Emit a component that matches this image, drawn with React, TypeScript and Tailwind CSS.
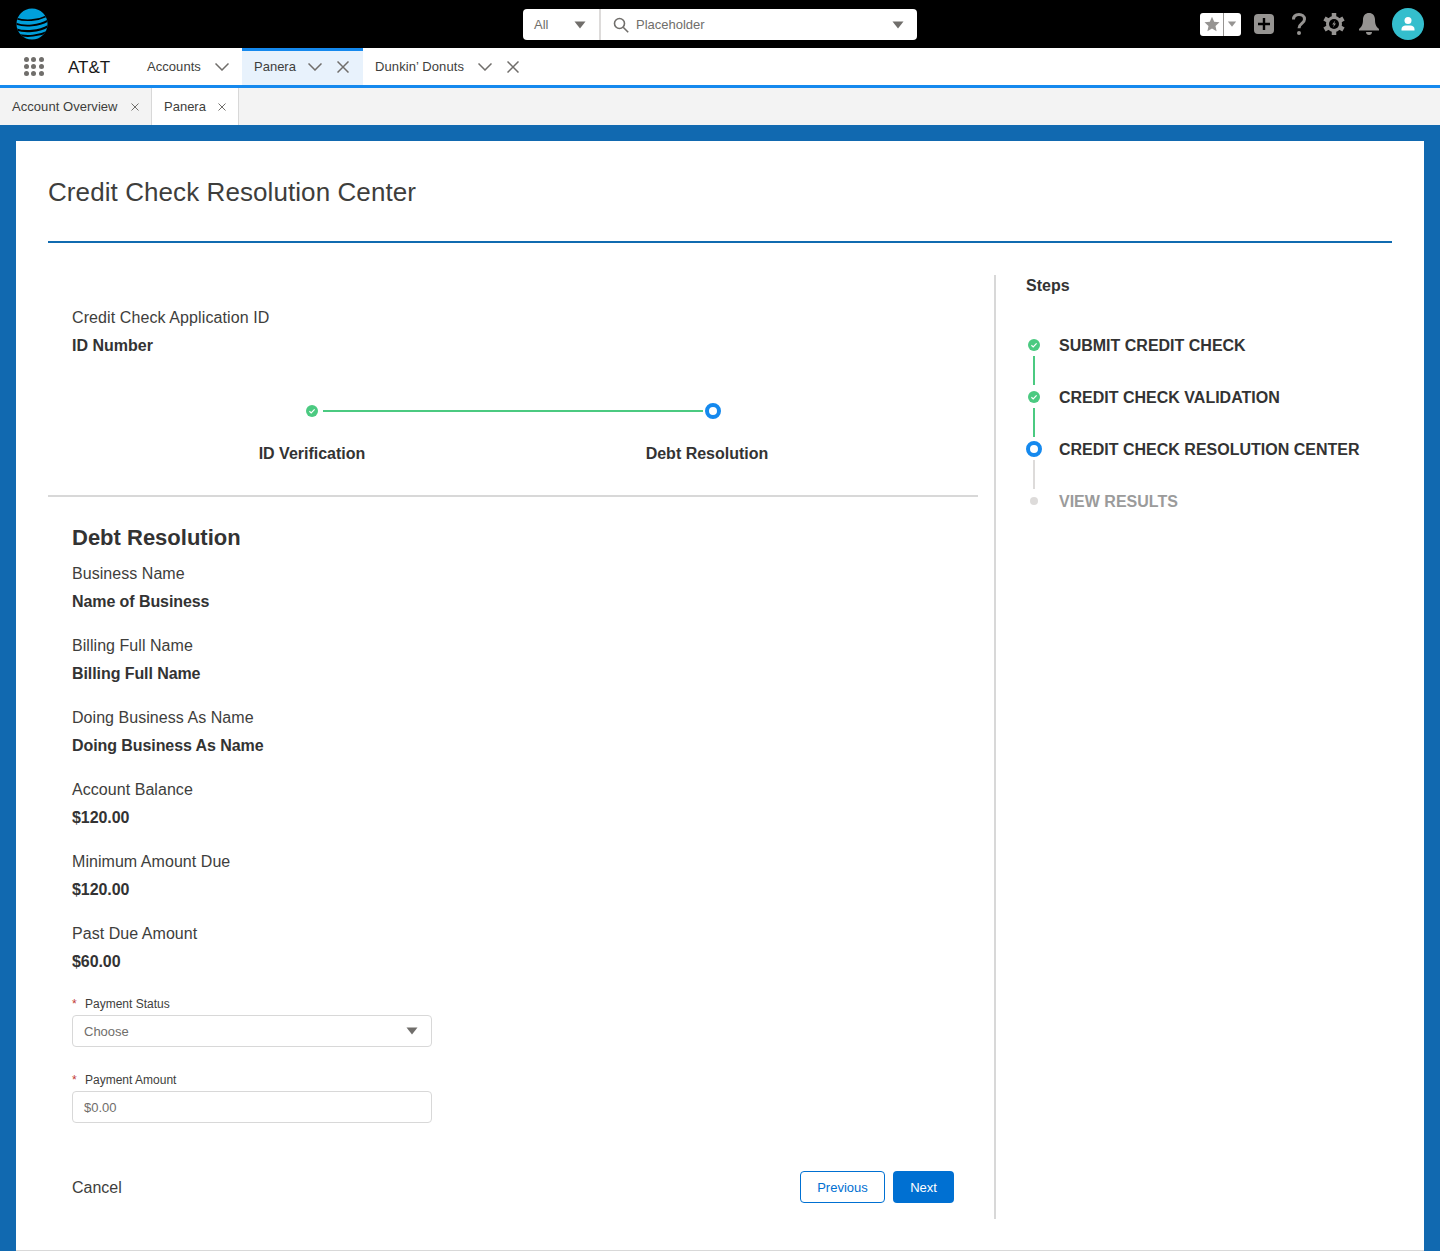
const Caret = ({ className = "" }: { className?: string }) => (
  <svg viewBox="0 0 12 8" className={`w-3 h-2 ${className}`}>
    <path d="M0.5 0.5h11L6 7.5z" fill="currentColor" />
  </svg>
);

const Chevron = () => (
  <svg viewBox="0 0 14 8" className="h-2 w-[14px] text-[#706e6b]" fill="none" stroke="currentColor" strokeWidth="1.500">
    <path d="M.5.5L7 7l6.500-6.500" />
  </svg>
);

const Close = () => (
  <svg viewBox="0 0 12 12" className="h-3 w-3 text-[#706e6b]" fill="none" stroke="currentColor" strokeWidth="1.500">
    <path d="M.5.5l11 11M11.500.5l-11 11" />
  </svg>
);

const SmallClose = () => (
  <svg viewBox="0 0 8 8" className="h-2 w-2 text-[#706e6b]" fill="none" stroke="currentColor" strokeWidth="1">
    <path d="M.5.5l7 7M7.500.5l-7 7" />
  </svg>
);

const Check = ({ size = 12 }: { size?: number }) => (
  <svg viewBox="0 0 12 12" width={size} height={size} className="shrink-0">
    <circle cx="6" cy="6" r="6" fill="#4bca81" />
    <path d="M3.400 6.200l1.800 1.700 3.400-3.500" fill="none" stroke="#fff" strokeWidth="1.200" />
  </svg>
);

const Globe = () => (
  <svg viewBox="0 0 32 32" className="h-8 w-8">
    <defs>
      <clipPath id="globe">
        <circle cx="16" cy="16" r="15.500" />
      </clipPath>
    </defs>
    <g clipPath="url(#globe)">
      <rect width="32" height="32" fill="#009fdb" />
      <path d="M-2 9.500C8 14 22 13 34 6.500" stroke="#000" strokeWidth="1.600" fill="none" />
      <path d="M-2 15C8 19.500 24 18 34 11.500" stroke="#000" strokeWidth="1.900" fill="none" />
      <path d="M-2 20.500C8 25 24 23.500 34 17" stroke="#000" strokeWidth="2.200" fill="none" />
      <path d="M0 26C10 29.500 24 28 34 22.500" stroke="#000" strokeWidth="2" fill="none" />
    </g>
  </svg>
);

const Field = ({ label, value }: { label: string; value: string }) => (
  <div className="mb-4 text-[16px] leading-[28px]">
    <div className="tracking-[0.05px] text-[#3e3e3c]">{label}</div>
    <div className="font-bold tracking-[-0.08px] text-[#333]">{value}</div>
  </div>
);

const FormLabel = ({ children }: { children: string }) => (
  <div className="flex h-[23px] items-center text-[12px] text-[#3e3e3c]">
    <span className="w-[13px] text-[#c23934]">*</span>
    {children}
  </div>
);

const TopBar = () => (
  <div className="relative flex h-12 items-center justify-between bg-black px-4">
    <Globe />
    <div className="absolute left-[523px] top-[9px] flex h-[31px] w-[394px] items-center rounded bg-white text-[13px] text-[#706e6b]">
      <div className="flex h-full w-[78px] items-center justify-between border-r-2 border-[#dddbda] pl-[11px] pr-[13px]">
        All
        <Caret />
      </div>
      <div className="flex flex-1 items-center pl-3 pr-[13px]">
        <svg viewBox="0 0 16 16" className="h-4 w-4" fill="none" stroke="currentColor" strokeWidth="1.600">
          <circle cx="6.500" cy="6.500" r="5" />
          <path d="M10.200 10.200l5 5" />
        </svg>
        <span className="ml-[7px] flex-1">Placeholder</span>
        <Caret />
      </div>
    </div>
    <div className="flex items-center text-[#969492]">
      <div className="flex h-[23px] w-[41px] items-center rounded-[3px] bg-white">
        <div className="flex h-full w-[24px] items-center justify-center border-r border-[#969492]">
          <svg viewBox="0 0 16 16" className="h-4 w-4" fill="currentColor">
            <path d="M8 .8l2.200 4.900 5.300.6-4 3.600 1.100 5.300L8 12.500l-4.600 2.700 1.100-5.300-4-3.600 5.300-.6z" />
          </svg>
        </div>
        <Caret className="ml-[3px] h-[6px] w-[10px]" />
      </div>
      <svg viewBox="0 0 20 20" className="ml-[13px] h-5 w-5">
        <rect width="20" height="20" rx="4" fill="currentColor" />
        <path d="M10 4v12M4 10h12" stroke="#000" strokeWidth="2.400" />
      </svg>
      <svg viewBox="0 0 14 22" className="ml-[18px] h-[22px] w-[14px]" fill="none" stroke="currentColor" strokeWidth="3">
        <path d="M1.500 6.500C1.500 3 4 1.500 7 1.500s5.500 1.700 5.500 4.700c0 4.300-5.500 4.100-5.500 9" />
        <circle cx="7" cy="20" r="2" fill="currentColor" stroke="none" />
      </svg>
      <svg viewBox="0 0 22 22" className="ml-[17px] h-[22px] w-[22px]">
        <g stroke="currentColor" strokeWidth="4.500">
          <path d="M11 0v22" />
          <path d="M1.500 5.500l19 11" />
          <path d="M1.500 16.500l19-11" />
        </g>
        <circle cx="11" cy="11" r="8" fill="currentColor" />
        <circle cx="11" cy="11" r="5" fill="#000" />
        <path d="M12.200 7.500l-3 4h1.800l-1 3 3-4H11.200z" fill="currentColor" />
      </svg>
      <svg viewBox="0 0 22 22" className="ml-[13px] h-[22px] w-[22px]" fill="currentColor">
        <path d="M11 0c3.600 0 6 2.700 6 6.500 0 5 1.300 7 3 8.500.7.600 1 1 1 1.500v1H1v-1c0-.5.300-.9 1-1.500 1.700-1.500 3-3.500 3-8.500C5 2.700 7.400 0 11 0z" />
        <path d="M8 19h6c0 1.700-1.300 3-3 3s-3-1.300-3-3z" />
      </svg>
      <div className="ml-[12px] flex h-8 w-8 items-center justify-center rounded-full bg-[#34becd]">
        <svg viewBox="0 0 16 16" className="h-4 w-4" fill="#fff">
          <circle cx="8" cy="4.500" r="3.500" />
          <path d="M1.500 14.500v-1.500c0-2 2-3.500 4-3.500h5c2 0 4 1.500 4 3.500v1.500z" />
        </svg>
      </div>
    </div>
  </div>
);

const AppNav = () => (
  <div className="flex h-10 items-stretch border-b-[3px] border-[#1589ee] bg-white text-[13px] text-[#3e3e3c]">
    <div className="ml-6 grid h-[19px] w-5 grid-cols-3 gap-[2px] self-center">
      {Array.from({ length: 9 }).map((_, i) => (
        <span key={i} className="h-[5px] w-[5px] rounded-full bg-[#706e6b]" />
      ))}
    </div>
    <div className="ml-6 flex w-[79px] items-center pt-[2px] text-[17px] text-[#181818]">AT&amp;T</div>
    <div className="flex w-[95px] items-center tracking-[0.05px]">
      <span className="w-[68px]">Accounts</span>
      <Chevron />
    </div>
    <div className="flex w-[121px] items-center border-t-[3px] border-[#1589ee] bg-[#e8f2fc] pb-[3px] pl-3">
      <span className="w-[54px]">Panera</span>
      <Chevron />
      <span className="ml-[15px]">
        <Close />
      </span>
    </div>
    <div className="flex items-center pl-3 tracking-[0.1px]">
      <span className="w-[103px]">Dunkin’ Donuts</span>
      <Chevron />
      <span className="ml-[15px]">
        <Close />
      </span>
    </div>
  </div>
);

const SubTabs = () => (
  <div className="flex h-[37px] bg-[#f3f3f3] text-[13px] text-[#3e3e3c]">
    <div className="flex w-[152px] items-center border-r border-[#d8d8d8] pl-3 tracking-[0.05px]">
      <span className="w-[119px]">Account Overview</span>
      <SmallClose />
    </div>
    <div className="flex w-[87px] items-center border-r border-[#d8d8d8] bg-white pl-3">
      <span className="w-[54px]">Panera</span>
      <SmallClose />
    </div>
  </div>
);

const Stepper = () => (
  <div className="mt-[43px] h-[94px] border-b-2 border-[#d8d8d8]">
    <div className="flex h-4 items-center">
      <span className="w-[258px]" />
      <Check />
      <span className="ml-[5px] h-[2px] w-[380px] bg-[#4bca81]" />
      <span className="ml-[2px] h-4 w-4 rounded-full border-4 border-[#1589ee] bg-white" />
    </div>
    <div className="mt-[23px] flex text-[16px] font-bold leading-[24px] text-[#333]">
      <span className="ml-[164px] w-[200px] text-center">ID Verification</span>
      <span className="ml-[195px] w-[200px] text-center">Debt Resolution</span>
    </div>
  </div>
);

const steps = [
  { label: "SUBMIT CREDIT CHECK", state: "done" },
  { label: "CREDIT CHECK VALIDATION", state: "done" },
  { label: "CREDIT CHECK RESOLUTION CENTER", state: "current" },
  { label: "VIEW RESULTS", state: "todo" },
];

const StepList = () => (
  <div className="ml-[30px] flex-1 pt-px">
    <div className="text-[16px] font-bold leading-5 text-[#333]">Steps</div>
    <div className="mt-[38px]">
      {steps.map((step, i) => (
        <div key={step.label}>
          <div className="flex h-[22px] items-center">
            <div className="flex w-4 justify-center">
              {step.state === "done" && <Check />}
              {step.state === "current" && (
                <span className="h-4 w-4 rounded-full border-4 border-[#1589ee] bg-white" />
              )}
              {step.state === "todo" && <span className="h-2 w-2 rounded-full bg-[#dddbda]" />}
            </div>
            <span
              className={`ml-[17px] pt-[2px] text-[16px] font-bold ${step.state === "todo" ? "text-[#9b9b9b]" : "text-[#333]"}`}
            >
              {step.label}
            </span>
          </div>
          {i < 3 && (
            <div className="flex h-[30px] w-4 justify-center">
              <span className={`h-[29px] w-[2px] ${step.state === "done" ? "bg-[#4bca81]" : "bg-[#dddbda]"}`} />
            </div>
          )}
        </div>
      ))}
    </div>
  </div>
);

export default function App() {
  return (
    <div className="h-[1251px] overflow-hidden bg-[#1169b0] font-['Liberation_Sans',Arial,sans-serif]">
      <TopBar />
      <AppNav />
      <SubTabs />
      <div className="mx-4 mt-4 h-[1110px] border-b border-[#d8d8d8] bg-white px-8">
        <div className="flex h-[102px] items-center border-b-2 border-[#106bb0] pt-[2px] text-[26px] tracking-[0.08px] text-[#3e3e3c]">
          Credit Check Resolution Center
        </div>
        <div className="mt-8 flex h-[944px]">
          <div className="w-[930px]">
            <div className="px-6 pt-[29px] text-[16px] leading-[28px]">
              <div className="tracking-[0.1px] text-[#3e3e3c]">Credit Check Application ID</div>
              <div className="font-bold text-[#333]">ID Number</div>
            </div>
            <Stepper />
            <div className="px-6 pt-[26px]">
              <h2 className="mb-[7px] text-[22px] font-bold leading-[30px] text-[#333]">Debt Resolution</h2>
              <Field label="Business Name" value="Name of Business" />
              <Field label="Billing Full Name" value="Billing Full Name" />
              <Field label="Doing Business As Name" value="Doing Business As Name" />
              <Field label="Account Balance" value="$120.00" />
              <Field label="Minimum Amount Due" value="$120.00" />
              <Field label="Past Due Amount" value="$60.00" />
              <div>
                <FormLabel>Payment Status</FormLabel>
                <div className="flex h-8 w-[360px] items-center justify-between rounded border border-[#d8d8d8] pl-[11px] pr-[13px] text-[13px] text-[#706e6b]">
                  <span className="pt-[2px]">Choose</span>
                  <Caret />
                </div>
              </div>
              <div className="mt-[21px]">
                <FormLabel>Payment Amount</FormLabel>
                <div className="flex h-8 w-[360px] items-center rounded border border-[#d8d8d8] pl-[11px] text-[13px] text-[#706e6b]">
                  <span className="pt-[2px]">$0.00</span>
                </div>
              </div>
              <div className="mt-12 flex items-center justify-between">
                <span className="pt-[2px] text-[16px] text-[#3e3e3c]">Cancel</span>
                <div className="flex gap-2 text-[13px]">
                  <button className="h-8 w-[85px] rounded border border-[#0070d2] bg-white pt-px text-[#0070d2]">Previous</button>
                  <button className="h-8 w-[61px] rounded bg-[#0070d2] pt-px text-white">Next</button>
                </div>
              </div>
            </div>
          </div>
          <div className="ml-4 h-full w-[2px] bg-[#d8d8d8]" />
          <StepList />
        </div>
      </div>
    </div>
  );
}
